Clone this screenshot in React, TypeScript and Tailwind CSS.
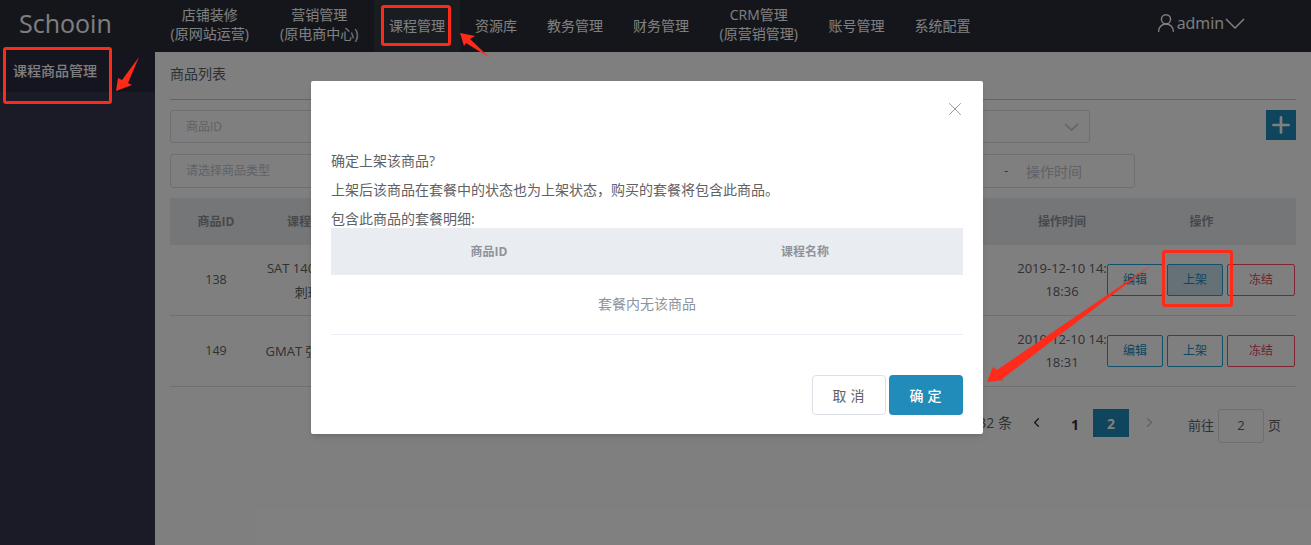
import React from "react";
import { X, ChevronLeft, ChevronRight, Plus, UserRound } from "lucide-react";

const font = '"Open Sans","Noto Sans CJK SC",sans-serif';

const nav: [string, string?][] = [
  ["店铺装修", "(原网站运营)"],
  ["营销管理", "(原电商中心)"],
  ["课程管理"],
  ["资源库"],
  ["教务管理"],
  ["财务管理"],
  ["CRM管理", "(原营销管理)"],
  ["账号管理"],
  ["系统配置"],
];

function Chevron({ className, w, h }: { className?: string; w: number; h: number }) {
  return (
    <svg className={className} width={w} height={h} viewBox={`0 0 ${w} ${h}`} fill="none" stroke="currentColor" strokeWidth="1.5">
      <polyline points={`1,1 ${w / 2},${h - 1} ${w - 1},1`} />
    </svg>
  );
}

function OutlineBtn({ label, red, active, wide }: { label: string; red?: boolean; active?: boolean; wide?: boolean }) {
  return (
    <div
      className={`flex h-[32px] items-center justify-center rounded-[2px] border text-[12px] ${wide ? "w-[68px]" : "w-[56px]"} ${
        red ? "border-[#ff4d6a] text-[#e0485f]" : "border-[#26a0d4] text-[#218cba]"
      } ${active ? "bg-[#cbe3ef]" : "bg-white"}`}
    >
      {label}
    </div>
  );
}

function Row({ id, name, sub, time, active }: { id: string; name: string; sub?: string; time: string; active?: boolean }) {
  return (
    <div className="grid h-[71px] grid-cols-[92px_98px_1fr_90px_189px] items-center border-b border-[#dcdfe6] text-[13px] text-[#606266]">
      <div className="text-center text-[12.5px]">{id}</div>
      <div className="whitespace-nowrap pl-[1px] text-center leading-[24px]">
        <div>{name}</div>
        {sub && <div>{sub}</div>}
      </div>
      <div />
      <div className="whitespace-nowrap text-center leading-[23px]">
        <div>2019-12-10 14:</div>
        <div>{time}</div>
      </div>
      <div className="flex justify-end gap-[4px] pr-[1px]">
        <OutlineBtn label="编辑" />
        <OutlineBtn label="上架" active={active} />
        <OutlineBtn label="冻结" red wide />
      </div>
    </div>
  );
}

export default function App() {
  return (
    <div className="relative h-[545px] w-[1311px] overflow-hidden bg-white" style={{ fontFamily: font }}>
      <header className="flex h-[52px] bg-[#292c36] text-white">
        <div className="w-[155px] pl-[19px] text-[25px] leading-[46px]">Schooin</div>
        <nav className="flex">
          {nav.map(([a, b]) => (
            <div
              key={a}
              className={`flex flex-col items-center justify-center whitespace-nowrap text-[14px] leading-[19px] ${
                b ? "w-[109.5px] pb-[4px]" : "px-[15px] pb-[2px]"
              } ${a === "课程管理" ? "bg-[#333842]" : ""}`}
            >
              <span>{a}</span>
              {b && <span>{b}</span>}
            </div>
          ))}
        </nav>
        <div className="ml-auto mr-[66px] flex items-center pb-[7px] text-[16px]">
          <UserRound size={22} strokeWidth={1.6} />
          <span>admin</span>
          <Chevron w={20} h={11} className="ml-[1px] mt-[2px]" />
        </div>
      </header>

      <div className="flex h-[493px]">
        <aside className="w-[155px] bg-[#34364d] text-white">
          <div className="h-[40px] bg-[#282a3e] pl-[13px] text-[14px] font-medium leading-[38px]">课程商品管理</div>
        </aside>
        <main className="w-[1141px] pl-[15px] text-[#606266]">
          <div className="h-[48px] border-b border-[#c8c8c8] text-[14px] leading-[44px]">商品列表</div>
          <div className="mt-[10px] flex items-start justify-between">
            <div className="flex h-[33px] w-[920px] items-center justify-between rounded-[3px] border border-[#dcdfe6] pl-[15px] pr-[9px] text-[12px] text-[#c0c4cc]">
              <span>商品ID</span>
              <Chevron w={15} h={8} className="mr-[1px] text-[#c0c4cc]" />
            </div>
            <div className="flex h-[30px] w-[30px] items-center justify-center bg-[#218cba] text-white">
              <Plus size={26} strokeWidth={2.5} />
            </div>
          </div>
          <div className="mt-[11px] flex h-[34px] w-[965px] items-center rounded-[3px] border border-[#dcdfe6] pl-[15px] text-[12px] text-[#c0c4cc]">
            <span>请选择商品类型</span>
            <span className="ml-auto text-[#606266]">-</span>
            <span className="ml-[18px] mr-[52px] text-[14px]">操作时间</span>
          </div>
          <div className="mt-[10px] grid h-[47px] grid-cols-[92px_98px_1fr_90px_189px] items-center bg-[#e9ecf0] text-[12px] font-bold text-[#909399]">
            <div className="text-center">商品ID</div>
            <div className="text-center">课程名称</div>
            <div />
            <div className="text-center">操作时间</div>
            <div className="text-center">操作</div>
          </div>
          <Row id="138" name="SAT 1400+冲刺" sub="刺班1" time="18:36" active />
          <Row id="149" name="GMAT 强化冲刺" time="18:31" />
          <div className="mt-[22px] flex items-start justify-end pr-[15px] text-[13px]">
            <span className="mr-[17px] mt-[3px] text-[14px]">共 32 条</span>
            <ChevronLeft size={15} strokeWidth={2.2} className="mr-[27px] mt-[6px] text-[#303133]" />
            <span className="mr-[14px] mt-[5px] text-[14px] font-bold text-[#303133]">1</span>
            <span className="flex h-[28px] w-[36px] items-center justify-center bg-[#218cba] text-[14px] font-bold text-white">2</span>
            <ChevronRight size={15} strokeWidth={2.2} className="ml-[13px] mr-[31px] mt-[6px] text-[#c0c4cc]" />
            <span className="mt-[7px]">前往</span>
            <span className="ml-[4px] flex h-[34px] w-[46px] items-center justify-center rounded-[3px] border border-[#dcdfe6]">2</span>
            <span className="ml-[4px] mt-[7px]">页</span>
          </div>
        </main>
      </div>

      {/* modal mask */}
      <div className="absolute inset-0 bg-black/50" />

      {/* dialog */}
      <div className="absolute left-[311px] top-[81px] h-[353px] w-[672px] rounded-[2px] bg-white px-[20px] text-[14px] text-[#606266] shadow-md">
        <X size={22} strokeWidth={1} className="absolute left-[633px] top-[17px] text-[#909399]" />
        <p className="pt-[70px] leading-[20px]">确定上架该商品?</p>
        <p className="mt-[9px] leading-[20px]">{"上架后该商品在套餐中的状态也为上架状态\uFF0C购买的套餐将包含此商品。"}</p>
        <p className="mt-[9px] leading-[19px]">包含此商品的套餐明细:</p>
        <div className="grid h-[47px] grid-cols-2 items-center bg-[#e9ecf0] text-center text-[12px] font-bold text-[#909399]">
          <span>商品ID</span>
          <span>课程名称</span>
        </div>
        <div className="h-[60px] border-b border-[#ebeef5] pb-[2px] text-center leading-[58px] text-[#909399]">套餐内无该商品</div>
        <div className="mt-[40px] flex justify-end gap-[3px]">
          <div className="flex h-[40px] w-[74px] items-center justify-center rounded-[4px] border border-[#dcdfe6] pl-[3px] tracking-[4px]">取消</div>
          <div className="flex h-[40px] w-[74px] items-center justify-center rounded-[4px] bg-[#218cba] pl-[3px] font-medium tracking-[4px] text-white">确定</div>
        </div>
      </div>

      {/* hand-drawn annotations */}
      <div className="absolute left-[381px] top-[5px] h-[41px] w-[70px] rounded-[3px] border-[3px] border-[#fe2a1a]" />
      <div className="absolute left-[3px] top-[47px] h-[57px] w-[109px] rounded-[3px] border-[3px] border-[#fe2a1a]" />
      <div className="absolute left-[1162px] top-[250px] h-[57px] w-[71px] rounded-[3px] border-[3px] border-[#fe2a1a]" />
      <svg className="absolute left-0 top-0" width="1311" height="545" fill="#fe2a1a">
        <polygon points="460,33 475,36 470,39 490,58 466,43 464,46" />
        <polygon points="116,91 118,78 122,80 139,57 128,83 132,85" />
        <polygon points="987,382 993,367 997,370 1153,264 1002,379 1004,380" />
      </svg>
    </div>
  );
}
